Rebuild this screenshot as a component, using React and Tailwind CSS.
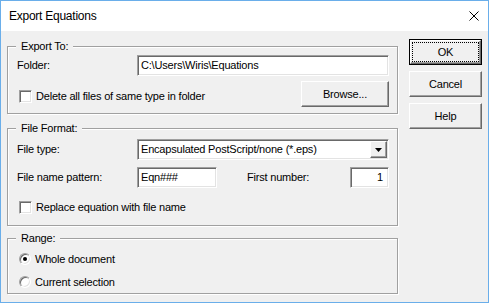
const FONT = "font-['Liberation_Sans',Arial,sans-serif]";

const SUNKEN =
  "border border-t-[#a0a0a0] border-l-[#a0a0a0] border-b-white border-r-white bg-white shadow-[inset_1px_1px_0_#696969,inset_-1px_-1px_0_#e3e3e3]";
const RAISED =
  "border border-t-white border-l-white border-b-[#696969] border-r-[#696969] bg-[#f0f0f0] shadow-[inset_-1px_-1px_0_#a0a0a0]";

function Group({ legend, className = "", children }) {
  return (
    <div className={`relative border border-[#a0a0a0] shadow-[inset_1px_1px_0_#fff,1px_1px_0_#fff] ${className}`}>
      <span className="absolute -top-[8px] left-[8px] bg-[#f0f0f0] px-[5px] leading-[14px]">{legend}</span>
      {children}
    </div>
  );
}

function Button({ children, isDefault = false, className = "" }) {
  if (isDefault) {
    return (
      <div className={`flex border border-black ${className}`}>
        <div className={`flex flex-1 ${RAISED}`}>
          <div className="m-[1px] flex flex-1 items-center justify-center border border-dotted border-black">
            {children}
          </div>
        </div>
      </div>
    );
  }
  return <div className={`flex items-center justify-center ${RAISED} ${className}`}>{children}</div>;
}

function Checkbox({ label, className = "" }) {
  return (
    <div className={`flex h-[14px] items-center gap-[4px] ${className}`}>
      <div className={`h-[13px] w-[13px] shrink-0 ${SUNKEN}`} />
      <span className="whitespace-nowrap leading-[14px]">{label}</span>
    </div>
  );
}

function Radio({ label, checked = false }) {
  return (
    <div className="ml-[2px] flex h-[16px] items-center gap-[4px]">
      <div className={`flex h-[12px] w-[12px] shrink-0 items-center justify-center rounded-full ${SUNKEN}`}>
        {checked && <div className="h-[4px] w-[4px] rounded-full bg-black" />}
      </div>
      <span className="whitespace-nowrap leading-[14px]">{label}</span>
    </div>
  );
}

export default function App() {
  return (
    <div
      className={`flex h-[303px] w-[489px] flex-col border border-[#6aaeea] bg-[#f0f0f0] text-[11px] tracking-[-0.2px] text-black ${FONT}`}
    >
      <div className="flex h-[30px] items-center justify-between bg-white pl-[8px]">
        <span className="text-[12px] tracking-[-0.25px]">Export Equations</span>
        <svg className="mr-[9px]" width="10" height="10" viewBox="0 0 10 10">
          <path d="M0.5 0.5L9.5 9.5M9.5 0.5L0.5 9.5" stroke="#000" strokeWidth="1" fill="none" />
        </svg>
      </div>

      <div className="flex flex-1 pl-[6px]">
        <div className="flex w-[391px] shrink-0 flex-col pt-[15px]">
          <Group legend="Export To:" className="h-[68px] pl-[9px] pr-[8px] pt-[8px]">
            <div className="flex h-[21px] items-center">
              <span className="w-[120px] shrink-0">Folder:</span>
              <div className={`flex h-[21px] w-[252px] shrink-0 items-center pl-[3px] ${SUNKEN}`}>
                C:\Users\Wiris\Equations
              </div>
            </div>
            <div className="mt-[5px] flex items-start justify-between">
              <Checkbox className="ml-[2px] mt-[8px]" label="Delete all files of same type in folder" />
              <Button className="h-[26px] w-[88px] shrink-0">Browse...</Button>
            </div>
          </Group>

          <Group legend="File Format:" className="mt-[14px] h-[98px] pl-[9px] pr-[8px] pt-[10px]">
            <div className="flex h-[21px] items-center">
              <span className="w-[120px] shrink-0">File type:</span>
              <div className={`flex h-[21px] w-[252px] shrink-0 items-center justify-between pl-[3px] ${SUNKEN}`}>
                <span className="whitespace-nowrap">Encapsulated PostScript/none (*.eps)</span>
                <div className={`mr-[1px] flex h-[17px] w-[17px] shrink-0 items-center justify-center ${RAISED}`}>
                  <svg width="7" height="4" viewBox="0 0 7 4">
                    <path d="M0 0H7L3.5 4Z" fill="#000" />
                  </svg>
                </div>
              </div>
            </div>
            <div className="mt-[7px] flex h-[21px] items-center">
              <span className="w-[120px] shrink-0 whitespace-nowrap">File name pattern:</span>
              <div className={`flex h-[21px] w-[80px] shrink-0 items-center pl-[3px] ${SUNKEN}`}>Eqn###</div>
              <span className="ml-[30px] whitespace-nowrap">First number:</span>
              <div className={`ml-auto flex h-[21px] w-[39px] shrink-0 items-center justify-end pr-[5px] ${SUNKEN}`}>
                1
              </div>
            </div>
            <Checkbox className="ml-[2px] mt-[12px]" label="Replace equation with file name" />
          </Group>

          <Group legend="Range:" className="mt-[12px] flex h-[56px] flex-col gap-[7px] pl-[9px] pt-[12px]">
            <Radio label="Whole document" checked />
            <Radio label="Current selection" />
          </Group>
        </div>

        <div className="ml-[11px] flex flex-col gap-[6px] pt-[8px]">
          <Button isDefault className="h-[26px] w-[73px]">OK</Button>
          <Button className="h-[26px] w-[73px]">Cancel</Button>
          <Button className="h-[26px] w-[73px]">Help</Button>
        </div>
      </div>
    </div>
  );
}
